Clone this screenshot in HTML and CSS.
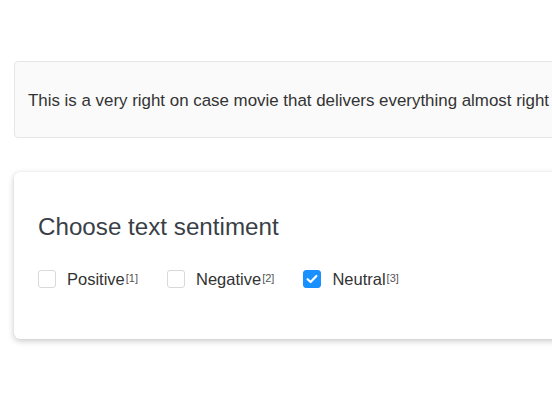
FILE: index.html
```html
<!DOCTYPE html>
<html>
<head>
<meta charset="utf-8">
<link rel="stylesheet" href="styles.css">
</head>
<body>
<div class="page">
  <div class="text-box">This is a very right on case movie that delivers everything almost right</div>
  <div class="card">
    <h4 class="title">Choose text sentiment</h4>
    <div class="choices">
      <label class="choice">
        <span class="box"></span>
        <span class="label">Positive<sup class="hotkey">[1]</sup></span>
      </label>
      <label class="choice">
        <span class="box"></span>
        <span class="label">Negative<sup class="hotkey">[2]</sup></span>
      </label>
      <label class="choice">
        <span class="box checked">
          <svg width="12" height="10" viewBox="0 0 12 10"><path d="M1.6 5.2 L4.6 8 L10.4 2" fill="none" stroke="#fff" stroke-width="2.2" stroke-linecap="round" stroke-linejoin="round"/></svg>
        </span>
        <span class="label">Neutral<sup class="hotkey">[3]</sup></span>
      </label>
    </div>
  </div>
</div>
</body>
</html>
```

FILE: styles.css
```css
html, body {
  margin: 0;
  padding: 0;
  background: #fff;
  overflow: hidden;
}
body {
  font-family: "Liberation Sans", Arial, sans-serif;
  color: #333;
}
.page {
  width: 760px;
  padding: 61px 0 20px 14px;
}
.text-box {
  background: #fafafa;
  border: 1px solid #e6e6e6;
  border-radius: 4px;
  padding: 26px 13px 23px;
  font-size: 16.9px;
  line-height: 26px;
  white-space: nowrap;
  overflow: hidden;
}
.card {
  margin-top: 34px;
  background: #fff;
  border-radius: 6px;
  box-shadow: 0 2px 6px rgba(0, 0, 0, 0.22), 0 0 1px rgba(0, 0, 0, 0.08);
  padding: 40px 24px 51px;
}
.title {
  margin: 0;
  font-size: 24.2px;
  font-weight: normal;
  line-height: 29px;
  color: #3a3f47;
}
.choices {
  display: flex;
  margin-top: 29px;
}
.choice {
  display: flex;
  align-items: center;
  margin-right: 29px;
  height: 18px;
}
.box {
  width: 16px;
  height: 16px;
  border: 1px solid #d9d9d9;
  border-radius: 3px;
  background: #fff;
  display: flex;
  align-items: center;
  justify-content: center;
  box-sizing: content-box;
}
.box.checked {
  background: #1890ff;
  border-color: #1890ff;
}
.label {
  margin-left: 11px;
  font-size: 16.5px;
  line-height: 18px;
  color: #333;
}
.hotkey {
  font-size: 11px;
  color: #555;
  vertical-align: top;
  position: relative;
  top: -1px;
  margin-left: 1px;
}
```
